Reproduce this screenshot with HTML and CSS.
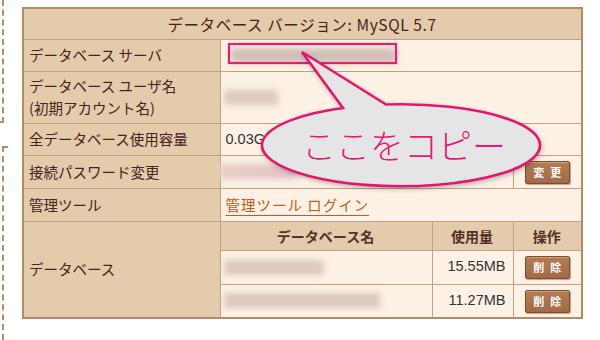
FILE: index.html
```html
<!DOCTYPE html>
<html lang="ja">

<head>
    <meta charset="UTF-8">
    <meta name="viewport" content="width=device-width, initial-scale=1.0">
    <title>データベース</title>
    <link rel="stylesheet" href="styles.css">
</head>

<body>
    <div class="page">
        <div class="side">
            <div class="side-top"></div>
            <div class="side-bottom"></div>
        </div>
        <div class="panel">
            <table class="db">
                <colgroup>
                    <col class="c-label">
                    <col class="c-name">
                    <col class="c-size">
                    <col class="c-op">
                </colgroup>
                <tr class="r-head">
                    <th colspan="4" class="title">データベース バージョン: MySQL 5.7</th>
                </tr>
                <tr class="r-std">
                    <th class="label">データベース サーバ</th>
                    <td colspan="3"><div class="blur b-server"></div></td>
                </tr>
                <tr class="r-tall">
                    <th class="label">データベース ユーザ名<br>(初期アカウント名)</th>
                    <td colspan="3"><div class="blur b-user"></div></td>
                </tr>
                <tr class="r-std">
                    <th class="label">全データベース使用容量</th>
                    <td colspan="3" class="num-left">0.03GB</td>
                </tr>
                <tr class="r-btn">
                    <th class="label">接続パスワード変更</th>
                    <td colspan="2" class="tight"><div class="blur b-pass"></div></td>
                    <td class="op"><a class="btn">変更</a></td>
                </tr>
                <tr class="r-btn">
                    <th class="label">管理ツール</th>
                    <td colspan="3"><a class="link">管理ツール ログイン</a></td>
                </tr>
                <tr class="r-sub">
                    <th class="label" rowspan="3">データベース</th>
                    <th class="sub">データベース名</th>
                    <th class="sub">使用量</th>
                    <th class="sub">操作</th>
                </tr>
                <tr class="r-item">
                    <td><div class="blur b-db1"></div></td>
                    <td class="num">15.55MB</td>
                    <td class="op"><a class="btn">削除</a></td>
                </tr>
                <tr class="r-item">
                    <td><div class="blur b-db2"></div></td>
                    <td class="num">11.27MB</td>
                    <td class="op"><a class="btn">削除</a></td>
                </tr>
            </table>
        </div>

        <!-- 吹き出し -->
        <svg class="note" width="600" height="340" viewBox="0 0 600 340">
            <rect class="mark" x="229" y="44" width="167" height="19"></rect>
            <path class="bubble" d="M 343 108 L 302 52 L 386 104.5 A 139 41 0 1 1 343 108 Z"></path>
            <text class="note-text" x="302" y="159">ここをコピー</text>
        </svg>
    </div>
</body>

</html>
```

FILE: styles.css
```css
* {
    margin: 0;
    padding: 0;
}

body {
    background: #fff;
    font-family: "Noto Sans CJK JP", sans-serif;
    color: #4a2220;
}

.page {
    position: relative;
    display: flex;
    width: 600px;
    height: 340px;
    overflow: hidden;
}

/* 左の点線 */
.side {
    width: 22px;
    display: flex;
    flex-direction: column;
}

.side-top {
    width: 2px;
    height: 121px;
    border-right: 2px dashed #b88c66;
    border-bottom: 2px dashed #b88c66;
}

.side-bottom {
    flex: 1;
    width: 4px;
    margin-top: 23px;
    margin-left: 2px;
    border-left: 2px dashed #b88c66;
    border-top: 2px dashed #b88c66;
}

.panel {
    padding-top: 7px;
}

table.db {
    width: 559px;
    table-layout: fixed;
    border-collapse: collapse;
    border: 2px solid #b48b67;
    font-size: 14.5px;
}

.c-label { width: 197px; }
.c-name { width: 212px; }
.c-size { width: 81px; }
.c-op { width: 69px; }

table.db th,
table.db td {
    border: 1px solid #bea189;
    background: #fdf1e5;
    font-weight: normal;
    text-align: left;
    padding: 0 6px 0 5px;
    vertical-align: middle;
}

table.db th.title,
table.db th.label,
table.db th.sub {
    background: #e3cbab;
}

table.db th.title {
    text-align: center;
    font-size: 15.5px;
    letter-spacing: 0.6px;
    padding-top: 1px;
}

table.db th.label {
    line-height: 22px;
}

table.db th.sub {
    text-align: center;
    font-weight: bold;
    font-size: 14px;
    color: #55302a;
}

.r-head { height: 31px; }
.r-std { height: 32px; }
.r-tall { height: 52px; }
.r-btn { height: 33px; }
.r-sub { height: 29px; }
.r-item { height: 34px; }

table.db td.num-left {
    font-family: "Liberation Sans", sans-serif;
    font-size: 14.5px;
    color: #333;
}

table.db td.num {
    text-align: right;
    font-family: "Liberation Sans", sans-serif;
    font-size: 14.5px;
    color: #333;
    padding-right: 7px;
    vertical-align: top;
    padding-top: 7px;
}

table.db td.tight {
    padding-left: 0;
}

table.db td.op {
    text-align: center;
    padding: 0;
}

/* ぼかし部分 */
.blur {
    height: 15px;
    background: #d3c3b9;
    filter: blur(3px);
}

.b-server { width: 166px; margin-left: 5px; background: #cfc0b8; }
.b-user { width: 54px; margin-left: -2px; background: #dccabe; }
.b-pass { width: 78px; margin-left: -2px; background: linear-gradient(90deg, #e6cfc6, #e4c0c4); }
.b-db1 { width: 100px; margin-left: -2px; background: #dcc9be; }
.b-db2 { width: 156px; margin-left: -2px; background: #dac7bd; }

.btn {
    display: inline-block;
    width: 43px;
    height: 21px;
    line-height: 21px;
    background: linear-gradient(#b27c55, #a26b45);
    border: 1px solid #7e4c2d;
    border-radius: 2px;
    box-shadow: 1px 1px 1px rgba(60, 30, 10, 0.35), inset 0 1px 0 rgba(255, 230, 200, 0.35);
    color: #fff;
    font-size: 11px;
    font-weight: bold;
    letter-spacing: 6px;
    text-indent: 6px;
    text-align: center;
}

.link {
    color: #c75a1c;
    text-decoration: underline;
    text-underline-offset: 4px;
    letter-spacing: 1px;
}

/* 吹き出し */
.note {
    position: absolute;
    left: 0;
    top: 0;
    pointer-events: none;
}

.mark {
    fill: none;
    stroke: #e2206f;
    stroke-width: 2.2;
}

.bubble {
    fill: #e6e5e5;
    stroke: #e2186f;
    stroke-width: 2.6;
    filter: drop-shadow(1px 2px 2px rgba(0, 0, 0, 0.25));
}

.note-text {
    fill: #e01c78;
    font-weight: 300;
    font-size: 34px;
}
```
